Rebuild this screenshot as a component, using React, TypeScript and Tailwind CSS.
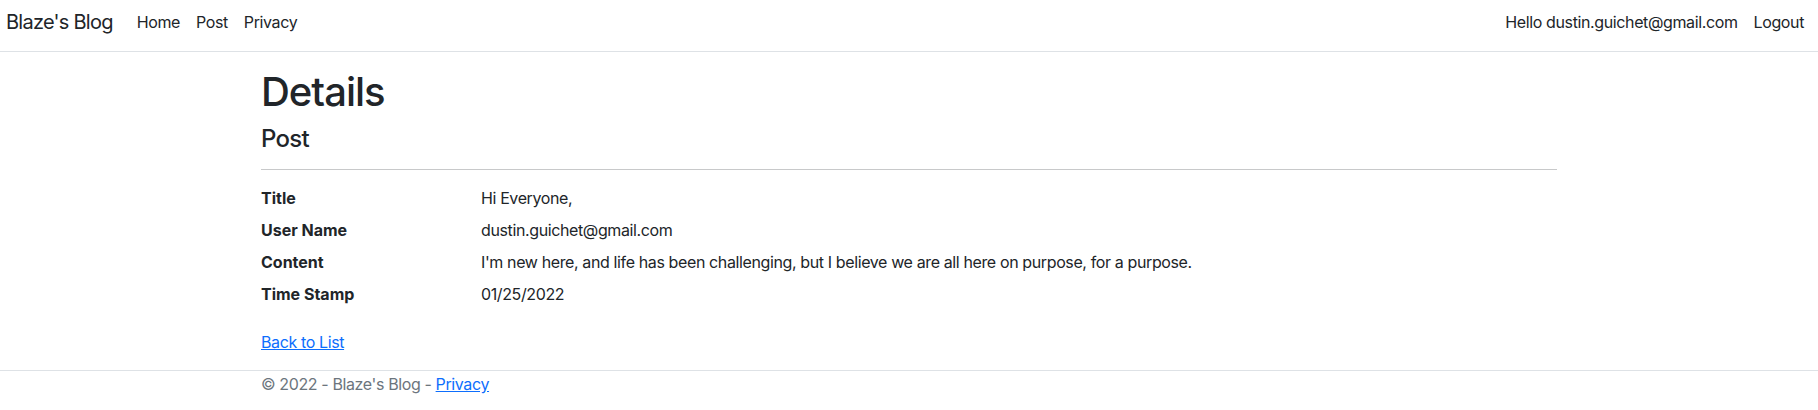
export default function App() {
  const rows: [string, string][] = [
    ["Title", "Hi Everyone,"],
    ["User Name", "dustin.guichet@gmail.com"],
    [
      "Content",
      "I'm new here, and life has been challenging, but I believe we are all here on purpose, for a purpose.",
    ],
    ["Time Stamp", "01/25/2022"],
  ];

  return (
    <div className="min-h-screen bg-white text-[#212529] font-['Inter','Liberation_Sans',sans-serif] text-base leading-6 tracking-[-0.38px]">
      {/* Navbar */}
      <header className="h-[52px] border-b border-[#dee2e6] flex items-center justify-between px-[6px] pb-[11px] pt-[3px]">
        <div className="flex items-center">
          <a className="text-[20px] leading-[30px] mr-[16px] tracking-[-0.75px]">Blaze's Blog</a>
          <nav className="flex">
            <a className="px-2 leading-6">Home</a>
            <a className="px-2 leading-6">Post</a>
            <a className="px-2 leading-6">Privacy</a>
          </nav>
        </div>
        <nav className="flex">
          <span className="px-2 leading-6">Hello dustin.guichet@gmail.com</span>
          <a className="px-2 leading-6">Logout</a>
        </nav>
      </header>

      {/* Main */}
      <main className="max-w-[1320px] mx-auto px-3 pt-4 pb-4">
        <h1 className="text-[40px] leading-[48px] font-medium mb-2 tracking-[-1px]">Details</h1>
        <h4 className="text-[24px] leading-[29px] font-medium tracking-[-0.7px]">Post</h4>
        <hr className="my-4 border-0 border-t border-[#c8c9ca]" />
        <dl className="grid grid-cols-[220px_1fr] mb-4">
          {rows.map(([k, v]) => (
            <div key={k} className="contents">
              <dt className="font-bold mb-2 tracking-normal">{k}</dt>
              <dd className="mb-2">{v}</dd>
            </div>
          ))}
        </dl>
        <div>
          <a href="#" className="text-[#0d6efd] underline">Back to List</a>
        </div>
      </main>

      {/* Footer */}
      <footer className="border-t border-[#dee2e6]">
        <div className="max-w-[1320px] mx-auto px-3 text-[#6c757d] leading-6 pt-px">
          © 2022 - Blaze's Blog - <a href="#" className="text-[#0d6efd] underline">Privacy</a>
        </div>
      </footer>
    </div>
  );
}
